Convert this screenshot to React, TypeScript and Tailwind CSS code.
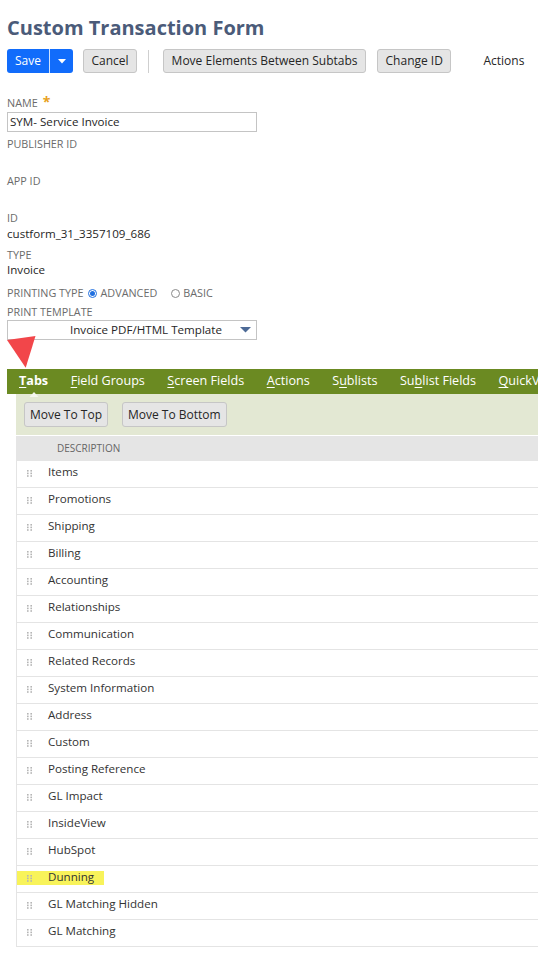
import React from "react";

const ROWS = [
  "Items",
  "Promotions",
  "Shipping",
  "Billing",
  "Accounting",
  "Relationships",
  "Communication",
  "Related Records",
  "System Information",
  "Address",
  "Custom",
  "Posting Reference",
  "GL Impact",
  "InsideView",
  "HubSpot",
  "Dunning",
  "GL Matching Hidden",
  "GL Matching",
];

const TABS: { pre: string; key: string; post: string; active?: boolean }[] = [
  { pre: "", key: "T", post: "abs", active: true },
  { pre: "", key: "F", post: "ield Groups" },
  { pre: "", key: "S", post: "creen Fields" },
  { pre: "", key: "A", post: "ctions" },
  { pre: "S", key: "u", post: "blists" },
  { pre: "Su", key: "b", post: "list Fields" },
  { pre: "", key: "Q", post: "uickView" },
];

function Handle() {
  return (
    <svg width="5" height="7" viewBox="0 0 5 7" className="shrink-0">
      {[0, 2.6, 5.2].map((y) => (
        <g key={y} fill="#b5b5b5">
          <rect x="0" y={y} width="1.6" height="1.6" />
          <rect x="3.4" y={y} width="1.6" height="1.6" />
        </g>
      ))}
    </svg>
  );
}

function Label({ children, className = "" }: { children: React.ReactNode; className?: string }) {
  return <div className={`text-[10.8px] leading-[14px] uppercase text-[#6b6b6b] ${className}`}>{children}</div>;
}

function GrayButton({ children, className = "" }: { children: React.ReactNode; className?: string }) {
  return (
    <button className={`h-[24px] rounded-[3px] border border-[#c6c6c6] bg-[#e5e5e5] text-[12px] text-[#262626] leading-none ${className}`}>
      {children}
    </button>
  );
}

export default function App() {
  return (
    <div className="relative w-[538px] h-[960px] overflow-hidden bg-white font-['Open_Sans',sans-serif]">
      {/* title + toolbar */}
      <h1 className="ml-[7px] mt-[13px] text-[20px] font-bold leading-[30px] text-[#4b5b79]">Custom Transaction Form</h1>

      <div className="mt-[6px] flex items-center">
        <div className="ml-[7px] flex h-[24px] overflow-hidden rounded-[3px] bg-[#116cfb] text-white">
          <span className="flex w-[42px] items-center justify-center text-[12px]">Save</span>
          <span className="w-px bg-white/80" />
          <span className="flex w-[23px] items-center justify-center">
            <svg width="8" height="5" viewBox="0 0 8 5">
              <path d="M0 0h8L4 4.5z" fill="#fff" />
            </svg>
          </span>
        </div>
        <GrayButton className="ml-[10px] px-[7.5px]">Cancel</GrayButton>
        <span className="ml-[11px] h-[23px] w-px bg-[#cfcfcf]" />
        <GrayButton className="ml-[14px] px-[7.5px]">Move Elements Between Subtabs</GrayButton>
        <GrayButton className="ml-[11px] px-[7.5px]">Change ID</GrayButton>
        <span className="ml-[32px] text-[12px] text-[#262626]">Actions</span>
      </div>

      {/* fields */}
      <div className="px-[7px]">
        <Label className="mt-[23px] flex items-start">
          NAME
          <span className="ml-[5px] text-[14px] font-bold leading-[12px] text-[#e8a020]">*</span>
        </Label>
        <div className="mt-[2px] flex h-[20px] w-[250px] items-center border border-[#c4c4c4] px-[2px] text-[11.6px] text-[#262626]">
          SYM- Service Invoice
        </div>

        <Label className="mt-[5px]">Publisher ID</Label>
        <Label className="mt-[23px]">App ID</Label>
        <Label className="mt-[23px]">ID</Label>
        <div className="mt-[1px] text-[11.6px] leading-[16px] text-[#262626]">custform_31_3357109_686</div>

        <Label className="mt-[6px]">Type</Label>
        <div className="text-[11.6px] leading-[16px] text-[#262626]">Invoice</div>

        <div className="mt-[8px] flex h-[14px] items-center text-[10.8px] uppercase text-[#6b6b6b]">
          <span>Printing Type</span>
          <span className="ml-[4px] flex h-[9px] w-[9px] items-center justify-center rounded-full border border-[#1f6fe0]">
            <span className="h-[5px] w-[5px] rounded-full bg-[#1f6fe0]" />
          </span>
          <span className="ml-[4px]">Advanced</span>
          <span className="ml-[14px] h-[9px] w-[9px] rounded-full border border-[#8a8a8a]" />
          <span className="ml-[3px]">Basic</span>
        </div>

        <Label className="mt-[5px]">Print Template</Label>
        <div className="mt-[1px] flex h-[20px] w-[250px] items-center border border-[#c4c4c4] pl-[62px] text-[11.6px] text-[#262626]">
          Invoice PDF/HTML Template
          <svg width="11" height="6" viewBox="0 0 11 6" className="ml-auto mr-[5px]">
            <path d="M0 0h11L5.5 5.5z" fill="#4d6a96" />
          </svg>
        </div>
      </div>

      {/* subtab bar */}
      <div className="ml-[7px] mt-[29px] flex h-[25px] items-center whitespace-nowrap bg-[#6b8a22] pl-[12px] text-[12.6px] text-white">
        {TABS.map((t) => (
          <span key={t.post} className={`relative mr-[22.5px] ${t.active ? "font-bold" : ""}`}>
            {t.pre}
            <span className="underline underline-offset-2">{t.key}</span>
            {t.post}
            {t.active && (
              <svg width="9" height="5" viewBox="0 0 9 5" className="absolute left-1/2 top-[20px] -translate-x-1/2">
                <path d="M0 5L4.5 0L9 5z" fill="#f4f6ee" />
              </svg>
            )}
          </span>
        ))}
      </div>

      <div className="ml-[16px] flex h-[41px] items-start gap-[14px] bg-[#e3e8d3] pl-[8px] pt-[8px]">
        <GrayButton className="h-[25px] px-[5px]">Move To Top</GrayButton>
        <GrayButton className="h-[25px] px-[5px]">Move To Bottom</GrayButton>
      </div>

      <div className="ml-[16px] mt-[1px] flex h-[25px] items-center bg-[#e5e5e5] pl-[41px] text-[10px] text-[#666]">
        DESCRIPTION
      </div>

      <div className="ml-[16px]">
        {ROWS.map((r) => (
          <div key={r} className="relative flex h-[27px] items-start border-b border-l border-[#e4e4e4] pl-[10px]">
            {r === "Dunning" && <span className="absolute left-0 top-[5px] h-[14px] w-[87px] bg-[#f8f35a]" />}
            <span className="relative mt-[9px]">
              <Handle />
            </span>
            <span className="relative ml-[16px] pt-[3px] text-[11.6px] leading-[16px] text-[#333]">{r}</span>
          </div>
        ))}
      </div>

      {/* red annotation arrow */}
      <svg width="40" height="40" viewBox="0 0 40 40" className="absolute left-0 top-[330px]">
        <path d="M7 10L35.5 6L25.7 37.7z" fill="#f2464a" />
      </svg>
    </div>
  );
}
